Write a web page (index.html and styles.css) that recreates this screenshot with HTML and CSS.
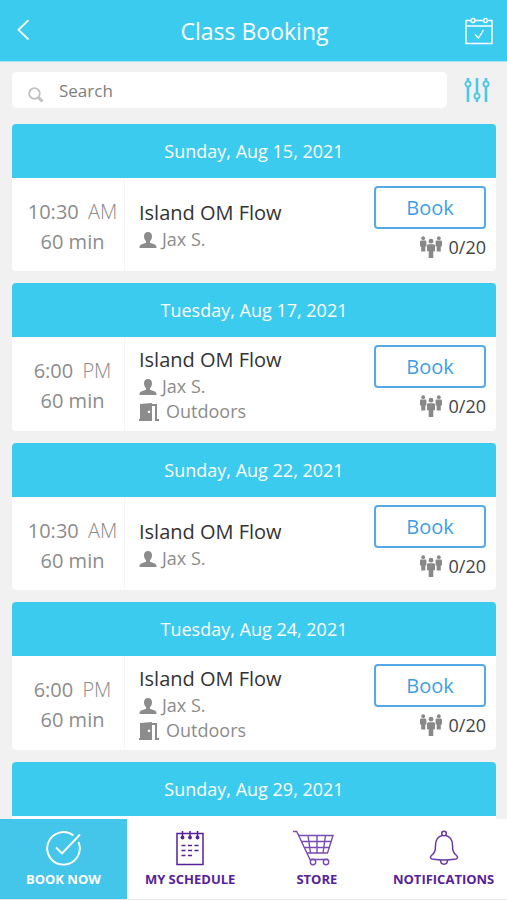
FILE: index.html
```
<!DOCTYPE html>
<html lang="en">
<head>
    <meta charset="UTF-8">
    <meta name="viewport" content="width=device-width, initial-scale=1.0">
    <title>Class Booking</title>
    <link rel="stylesheet" href="styles.css">
</head>
<body>
    <!-- shared icons -->
    <svg class="sprite" aria-hidden="true">
        <symbol id="icon-person" viewBox="0 0 18 18">
            <path d="M9 1C6.300 1 5 2.700 5 5.200c0 2.200.9 4 2 5v1.600L2.200 13.600C1 14.100.5 15 .5 17h17c0-2-.5-2.900-1.700-3.400L11 11.800v-1.600c1.100-1 2-2.800 2-5C13 2.700 11.700 1 9 1z"/>
        </symbol>
        <symbol id="icon-door" viewBox="0 0 20 20">
            <path fill-rule="evenodd" d="M1 2l12-1v18H0v-2h1zM10 8.500a1.300 1.300 0 1 0 .01 0z"/>
            <path d="M13 2h5v15h2v2h-4V4h-3z"/>
        </symbol>
        <symbol id="icon-group" viewBox="0 0 22 22">
            <circle cx="3.200" cy="2.200" r="1.900"/>
            <path d="M1.200 4.600h4q1.200 0 1.200 1.200v4.700H5.300v5H1.200v-5H0V5.800q0-1.200 1.200-1.200z"/>
            <circle cx="18.800" cy="2.200" r="1.900"/>
            <path d="M16.800 4.600h4q1.200 0 1.200 1.200v4.700h-1.200v5h-4.100v-5h-1.100V5.800q0-1.200 1.200-1.200z"/>
            <circle cx="11" cy="5.200" r="2.400"/>
            <path d="M8.500 8.200h5q1.500 0 1.500 1.500v5.500h-1.700V22H8.700v-6.800H7V9.700q0-1.500 1.500-1.500z"/>
        </symbol>
    </svg>

    <div class="app">
        <header class="topbar">
            <button class="icon-button" aria-label="Back">
                <svg width="14" height="22" viewBox="0 0 14 22" fill="none" stroke="currentColor" stroke-width="1.800">
                    <path d="M12.500 0L2.500 9.800 12.500 19.500"/>
                </svg>
            </button>
            <h1>Class Booking</h1>
            <button class="icon-button" aria-label="My calendar">
                <svg width="28" height="28" viewBox="0 0 28 28" fill="none" stroke="currentColor" stroke-width="1.400">
                    <path d="M5.500 3.500H1v23h26v-23h-4.500M10 3.500h8.500M1 9h26"/>
                    <circle cx="8" cy="3.500" r="2"/>
                    <circle cx="20.500" cy="3.500" r="2"/>
                    <path d="M10 17.500l3.500 3.500L18.500 13"/>
                </svg>
            </button>
        </header>

        <div class="search-row">
            <label class="search-box">
                <svg width="16" height="16" viewBox="0 0 16 16" fill="none" stroke="#c0c0c0">
                    <circle cx="6.500" cy="6.500" r="5.300" stroke-width="1.800"/>
                    <path d="M10.500 10.500l4 4" stroke-width="3"/>
                </svg>
                <input type="search" placeholder="Search" aria-label="Search">
            </label>
            <button class="icon-button filter" aria-label="Filter">
                <svg width="26" height="26" viewBox="0 0 26 26" fill="none" stroke="currentColor" stroke-width="1.800">
                    <path d="M4 1v3M4 10v15M13 1v15M13 22v3M22 1v3M22 10v15" stroke-width="2.600"/>
                    <circle cx="4" cy="7" r="2.600"/>
                    <circle cx="13" cy="19" r="2.600"/>
                    <circle cx="22" cy="7" r="2.600"/>
                </svg>
            </button>
        </div>

        <main class="class-list">
            <section class="card">
                <h2>Sunday, Aug 15, 2021</h2>
                <div class="card-body">
                    <div class="time">
                        <div>10:30 <span class="ampm">AM</span></div>
                        <div>60 min</div>
                    </div>
                    <div class="details">
                        <h3>Island OM Flow</h3>
                        <p><svg class="icon-sm"><use href="#icon-person"/></svg>Jax S.</p>
                    </div>
                    <div class="booking">
                        <button class="book">Book</button>
                        <div class="spots"><svg class="icon-group"><use href="#icon-group"/></svg>0/20</div>
                    </div>
                </div>
            </section>

            <section class="card">
                <h2>Tuesday, Aug 17, 2021</h2>
                <div class="card-body">
                    <div class="time">
                        <div>6:00 <span class="ampm">PM</span></div>
                        <div>60 min</div>
                    </div>
                    <div class="details">
                        <h3>Island OM Flow</h3>
                        <p><svg class="icon-sm"><use href="#icon-person"/></svg>Jax S.</p>
                        <p><svg class="icon-md"><use href="#icon-door"/></svg>Outdoors</p>
                    </div>
                    <div class="booking">
                        <button class="book">Book</button>
                        <div class="spots"><svg class="icon-group"><use href="#icon-group"/></svg>0/20</div>
                    </div>
                </div>
            </section>

            <section class="card">
                <h2>Sunday, Aug 22, 2021</h2>
                <div class="card-body">
                    <div class="time">
                        <div>10:30 <span class="ampm">AM</span></div>
                        <div>60 min</div>
                    </div>
                    <div class="details">
                        <h3>Island OM Flow</h3>
                        <p><svg class="icon-sm"><use href="#icon-person"/></svg>Jax S.</p>
                    </div>
                    <div class="booking">
                        <button class="book">Book</button>
                        <div class="spots"><svg class="icon-group"><use href="#icon-group"/></svg>0/20</div>
                    </div>
                </div>
            </section>

            <section class="card">
                <h2>Tuesday, Aug 24, 2021</h2>
                <div class="card-body">
                    <div class="time">
                        <div>6:00 <span class="ampm">PM</span></div>
                        <div>60 min</div>
                    </div>
                    <div class="details">
                        <h3>Island OM Flow</h3>
                        <p><svg class="icon-sm"><use href="#icon-person"/></svg>Jax S.</p>
                        <p><svg class="icon-md"><use href="#icon-door"/></svg>Outdoors</p>
                    </div>
                    <div class="booking">
                        <button class="book">Book</button>
                        <div class="spots"><svg class="icon-group"><use href="#icon-group"/></svg>0/20</div>
                    </div>
                </div>
            </section>

            <section class="card">
                <h2>Sunday, Aug 29, 2021</h2>
                <div class="card-body"></div>
            </section>
        </main>

        <nav class="tabs">
            <a href="#book" class="active">
                <svg width="36" height="36" viewBox="0 0 36 36" fill="none" stroke="currentColor" stroke-width="1.900">
                    <path d="M28.500 5.500A16.300 16.300 0 1 0 33.500 12"/>
                    <path d="M11 17.500l6 6L35 4.500"/>
                </svg>
                Book Now
            </a>
            <a href="#schedule">
                <svg width="36" height="36" viewBox="0 0 36 36" fill="none" stroke="currentColor" stroke-width="1.500">
                    <path d="M5 3.500h26v31H5z"/>
                    <path d="M10.500 1v5M18 1v5M25.500 1v5"/>
                    <g fill="currentColor" stroke="none">
                        <circle cx="10.500" cy="7.500" r="1.900"/>
                        <circle cx="18" cy="7.500" r="1.900"/>
                        <circle cx="25.500" cy="7.500" r="1.900"/>
                    </g>
                    <path d="M9.500 15.500h4M16 15.500h4M22.500 15.500h4M9.500 20.500h4M16 20.500h4M22.500 20.500h4M9.500 25.500h4M16 25.500h4"/>
                </svg>
                My Schedule
            </a>
            <a href="#store">
                <svg width="48" height="36" viewBox="0 0 48 36" fill="none" stroke="#7a4bb3" stroke-width="1.400">
                    <path d="M0 1.500h3.500l2.500 4h34L34.500 23H14M4 2l13 27.500h18"/>
                    <path d="M9 11.500h29.500M11.500 17.500h25M15 5.500l2.500 17.500M24 5.500V23M32.500 5.500L30 23"/>
                    <circle cx="20" cy="32" r="2.700"/>
                    <circle cx="33" cy="32" r="2.700"/>
                </svg>
                Store
            </a>
            <a href="#notifications">
                <svg width="36" height="36" viewBox="0 0 36 36" fill="none" stroke="#6a38a8" stroke-width="1.500">
                    <circle cx="18" cy="3.500" r="2.300"/>
                    <path d="M16 5.500C11 7 9.500 10.500 9.500 15c0 6-.8 8-4 10.500-1.500 1.200-1.500 3 .5 3.500 7 1.300 17 1.300 24 0 2-.5 2-2.300.5-3.500-3.200-2.500-4-4.500-4-10.500 0-4.500-1.500-8-6.500-9.500"/>
                    <path d="M14.500 30c0 5.500 7 5.500 7 0"/>
                </svg>
                Notifications
            </a>
        </nav>
    </div>
</body>
</html>
```
FILE: styles.css
```
* {
    box-sizing: border-box;
}

body {
    margin: 0;
    font-family: "Open Sans", sans-serif;
    background-color: #f1f1f1;
    color: #333;
}

h1, h2, h3, p {
    margin: 0;
    font-weight: normal;
}

button, input {
    font-family: inherit;
}

.sprite {
    position: absolute;
    width: 0;
    height: 0;
}

.app {
    display: flex;
    flex-direction: column;
    height: 100vh;
}

.topbar {
    display: flex;
    align-items: center;
    justify-content: space-between;
    height: 62px;
    padding: 0 14px 0 16px;
    background-color: #3bcbee;
    border-bottom: 1px solid #a5e4f5;
    color: white;
}

.topbar h1 {
    font-size: 23px;
    line-height: 32px;
}

.icon-button {
    display: flex;
    width: 28px;
    padding: 0;
    background: none;
    border: none;
    color: inherit;
    cursor: pointer;
}

.search-row {
    display: flex;
    align-items: center;
    gap: 17px;
    padding: 10px 15px 16px 12px;
}

.search-box {
    display: flex;
    flex: 1;
    align-items: center;
    gap: 15px;
    height: 36px;
    padding: 0 16px;
    background-color: white;
    border-radius: 5px;
}

.search-box svg {
    margin-top: 10px;
}

.search-box input {
    flex: 1;
    min-width: 0;
    padding: 0;
    border: none;
    outline: none;
    background: none;
    font-size: 17px;
    color: #333;
}

.search-box input::placeholder {
    color: #808080;
}

.filter {
    color: #4cc8e4;
}

.class-list {
    display: flex;
    flex: 1;
    flex-direction: column;
    gap: 12px;
    min-height: 0;
    padding: 0 11px 0 12px;
    overflow-y: auto;
    scrollbar-width: none;
}

.card {
    flex-shrink: 0;
    background-color: white;
    border-radius: 4px;
    overflow: hidden;
}

.card h2 {
    background-color: #3bcbee;
    color: white;
    font-size: 18px;
    line-height: 54px;
    text-align: center;
}

.card-body {
    display: flex;
    min-height: 93px;
}

.time {
    display: flex;
    flex-direction: column;
    justify-content: center;
    width: 113px;
    padding: 4px 0 0 9px;
    border-right: 1px solid #f3f6f6;
    color: #8c8c8c;
    font-size: 20px;
    line-height: 30px;
    text-align: center;
}

.ampm {
    margin-left: 4px;
    color: #8c8c8c;
    font-weight: 300;
}

.details {
    flex: 1;
    align-self: center;
    padding: 9px 0 7px 14px;
}

.details h3 {
    font-size: 20px;
    line-height: 28px;
}

.details p {
    display: flex;
    align-items: center;
    gap: 5px;
    color: #8c8c8c;
    font-size: 18px;
    line-height: 25px;
}

.icon-sm {
    width: 18px;
    height: 18px;
    fill: #8c8c8c;
}

.icon-md {
    width: 20px;
    height: 20px;
    margin-right: 2px;
    fill: #8c8c8c;
}

.booking {
    display: flex;
    flex-direction: column;
    padding: 8px 10px 0 0;
}

.book {
    width: 112px;
    height: 43px;
    padding: 0;
    background-color: white;
    border: 2px solid #55a9e6;
    border-radius: 4px;
    color: #3d9fe3;
    font-size: 20px;
    cursor: pointer;
}

.spots {
    display: flex;
    align-items: center;
    justify-content: flex-end;
    gap: 7px;
    padding-top: 4px;
    color: #444;
    font-size: 18px;
    line-height: 28px;
}

.icon-group {
    width: 22px;
    height: 22px;
    fill: #888;
}

.tabs {
    display: flex;
    height: 81px;
    background-color: white;
    border-bottom: 1px solid #e8e8e8;
}

.tabs a {
    display: flex;
    flex: 1 1 0;
    flex-direction: column;
    align-items: center;
    gap: 4px;
    min-width: 0;
    padding-top: 11px;
    color: #56229b;
    font-size: 13px;
    font-weight: 700;
    line-height: 18px;
    text-decoration: none;
    text-transform: uppercase;
    white-space: nowrap;
}

.tabs .active {
    background-color: #44c5ea;
    color: white;
}
```
